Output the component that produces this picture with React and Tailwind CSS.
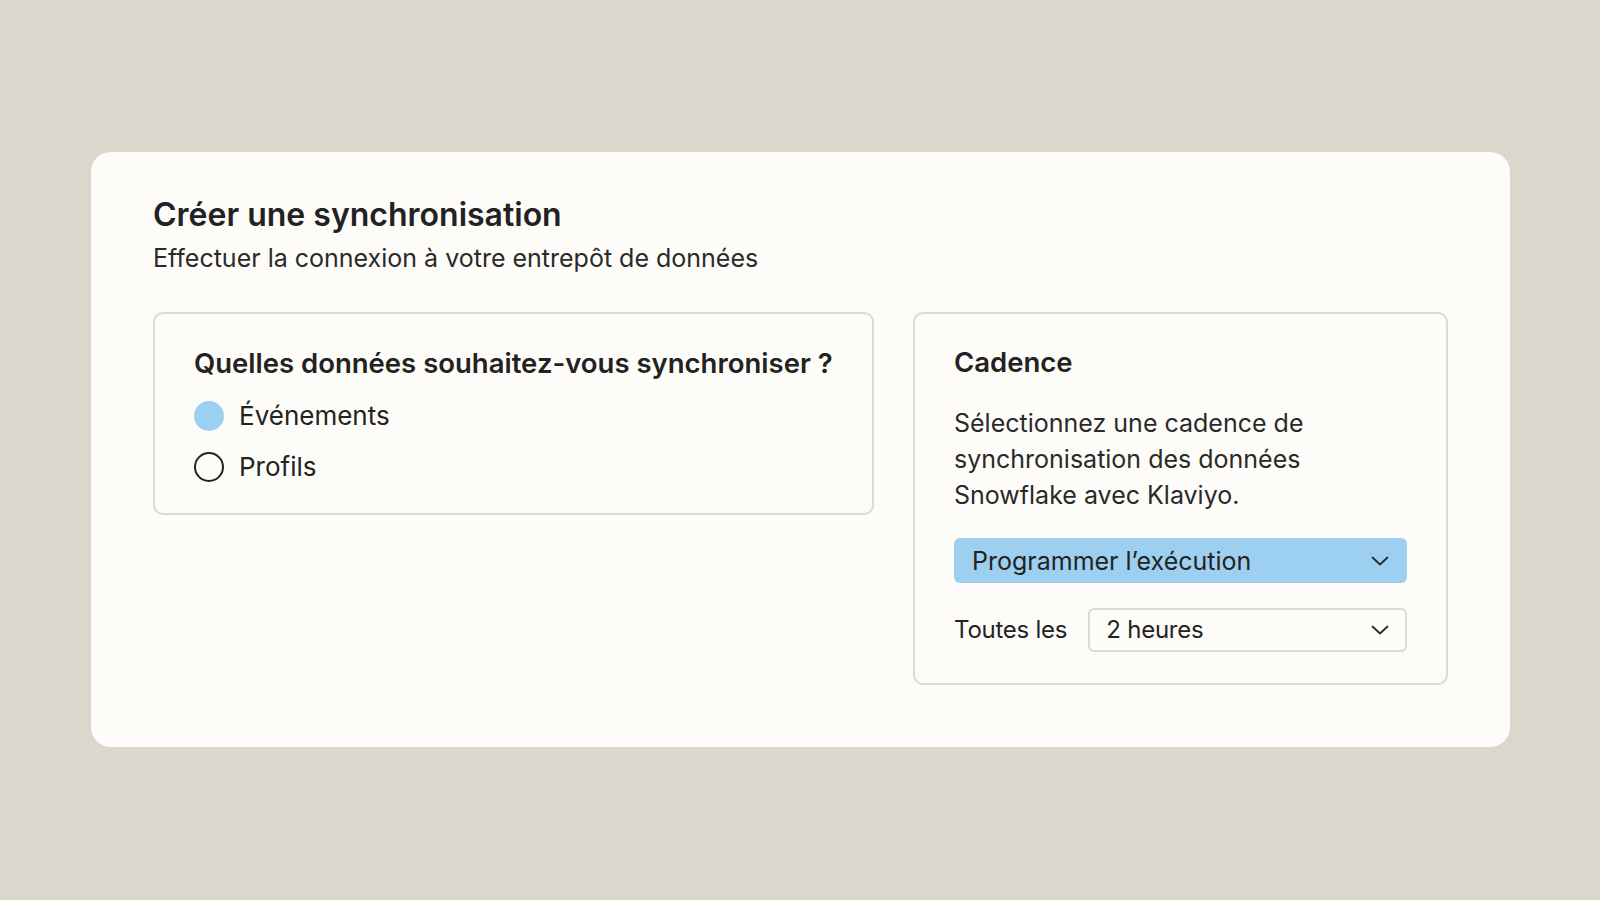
import React from "react";

function Chevron() {
  return (
    <svg width="18" height="10" viewBox="0 0 18 10" fill="none" className="shrink-0">
      <path d="M1.5 1.5L9 8.5L16.5 1.5" stroke="#2a2a2a" strokeWidth="1.8" strokeLinecap="round" strokeLinejoin="round" />
    </svg>
  );
}

export default function App() {
  return (
    <div
      className="w-[1600px] h-[900px] bg-[#dcd7cd] pt-[152px] pl-[91px] text-[#232323]"
      style={{ fontFamily: "Inter, 'Noto Sans', sans-serif" }}
    >
      <div className="w-[1419px] h-[595px] bg-[#fefcf9] rounded-[20px] pt-[44px] px-[62px]">
        <h1 className="text-[32px] leading-[38px] font-semibold text-[#222]">
          Créer une synchronisation
        </h1>
        <p className="mt-[8px] text-[25px] leading-[32px] text-[#2a2a2a]">
          Effectuer la connexion à votre entrepôt de données
        </p>

        <div className="mt-[38px] flex items-start gap-[39px]">
          <div className="w-[721px] border-2 border-[#dcd9d3] rounded-[10px] pl-[39px] pt-[32px] pb-[31px]">
            <h2 className="text-[27.5px] leading-[34px] font-semibold text-[#222]">
              Quelles données souhaitez-vous synchroniser ?
            </h2>
            <div className="mt-[20px] flex flex-col gap-[20px]">
              <div className="flex items-center gap-[15px] h-[31px]">
                <span className="w-[30px] h-[30px] rounded-full bg-[#9dd0f0]" />
                <span className="text-[26px] leading-[32px]">Événements</span>
              </div>
              <div className="flex items-center gap-[15px] h-[31px]">
                <span className="w-[30px] h-[30px] rounded-full border-2 border-[#222]" />
                <span className="text-[26px] leading-[32px]">Profils</span>
              </div>
            </div>
          </div>

          <div className="w-[535px] border-2 border-[#dcd9d3] rounded-[10px] px-[39px] pt-[31px] pb-[31px]">
            <h2 className="text-[27.5px] leading-[34px] font-semibold text-[#222]">
              Cadence
            </h2>
            <p className="mt-[26px] text-[25px] leading-[36px] text-[#2a2a2a]">
              Sélectionnez une cadence de
              <br />
              synchronisation des données
              <br />
              Snowflake avec Klaviyo.
            </p>
            <div className="mt-[25px] h-[45px] rounded-[6px] bg-[#9dd0f0] flex items-center justify-between pl-[18px] pr-[18px]">
              <span className="text-[25px] leading-[32px]">Programmer l’exécution</span>
              <Chevron />
            </div>
            <div className="mt-[25px] flex items-center gap-[21px]">
              <span className="text-[24px] leading-[32px] tracking-[-0.01em] whitespace-nowrap">Toutes les</span>
              <div className="flex-1 h-[44px] rounded-[6px] border-2 border-[#dcd9d3] flex items-center justify-between pl-[16px] pr-[16px]">
                <span className="text-[24px] leading-[32px] tracking-[-0.01em]">2 heures</span>
                <Chevron />
              </div>
            </div>
          </div>
        </div>
      </div>
    </div>
  );
}
